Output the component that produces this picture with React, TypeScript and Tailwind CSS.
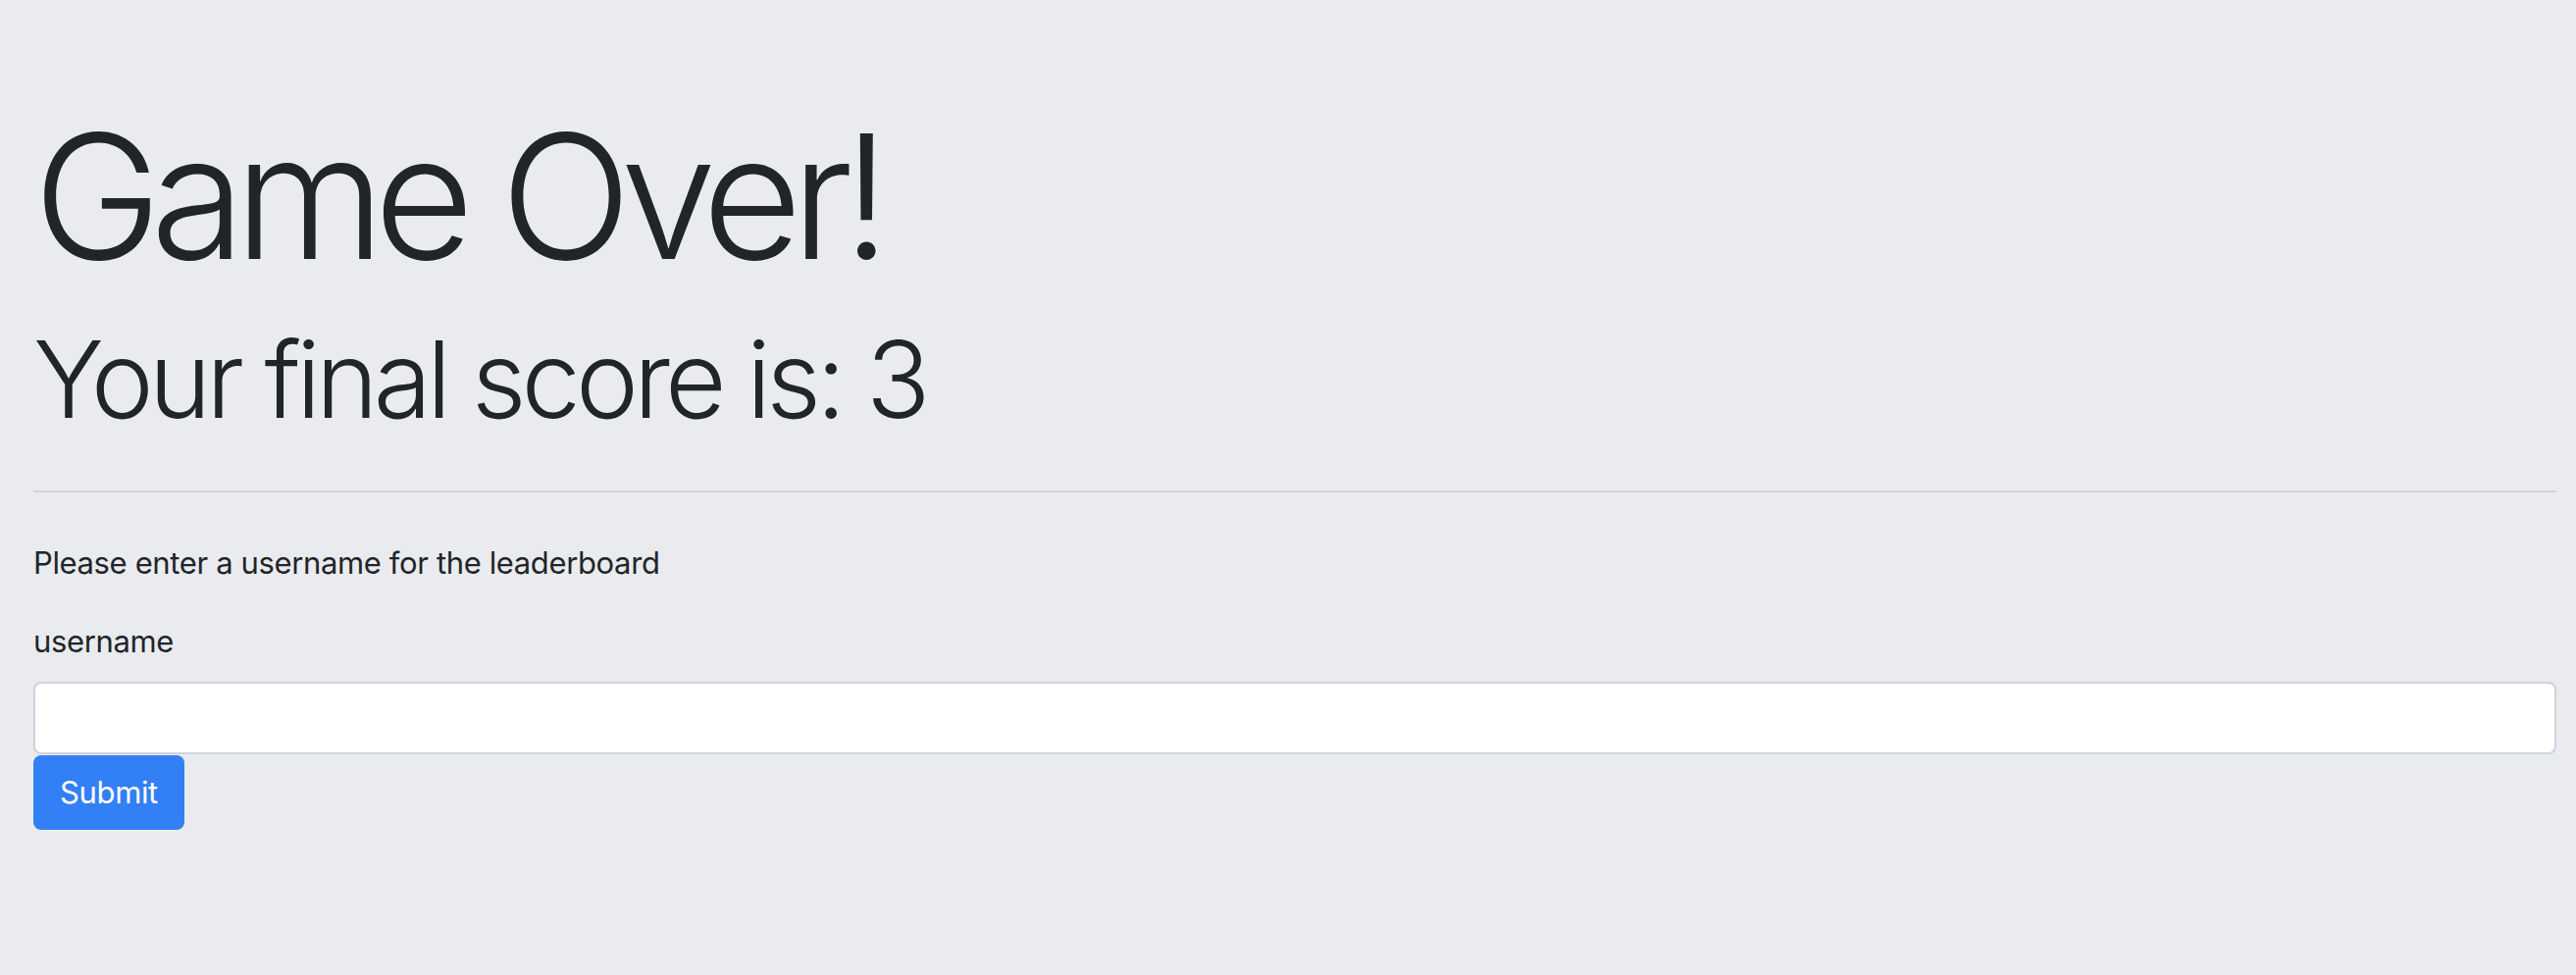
import { useState } from 'react';

const App = () => {
  const [username, setUsername] = useState('');

  return (
    <div
      className="min-h-screen bg-[#eaebef] text-[#212529] pl-[34px] pr-[20px] tracking-[-0.023em]"
      style={{ fontFamily: 'Inter, "Helvetica Neue", Arial, sans-serif' }}
    >
      <h1 className="pt-[94px] text-[176px] leading-[1.2] font-light tracking-[-0.064em]">Game Over!</h1>
      <h2 className="mt-[17px] text-[108px] leading-[1.2] font-light tracking-[-0.046em]">
        Your final score is: 3
      </h2>
      <hr className="mt-[48px] border-0 border-t-2 border-[#d1d2d6]" />
      <p className="mt-[48px] text-[31px] leading-[48px]">Please enter a username for the leaderboard</p>
      <form onSubmit={(e) => e.preventDefault()}>
        <label htmlFor="username" className="block mt-[32px] text-[31px] leading-[48px]">
          username
        </label>
        <input
          id="username"
          value={username}
          onChange={(e) => setUsername(e.target.value)}
          className="mt-[17px] block w-full h-[74px] bg-white border-2 border-[#ced4da] rounded-[8px] px-[24px] text-[31px] outline-none"
        />
        <button
          type="submit"
          className="block mt-[1px] w-[154px] h-[76px] bg-[#337ff5] text-white text-[31px] rounded-[8px]"
        >
          Submit
        </button>
      </form>
    </div>
  );
};

export default App;
